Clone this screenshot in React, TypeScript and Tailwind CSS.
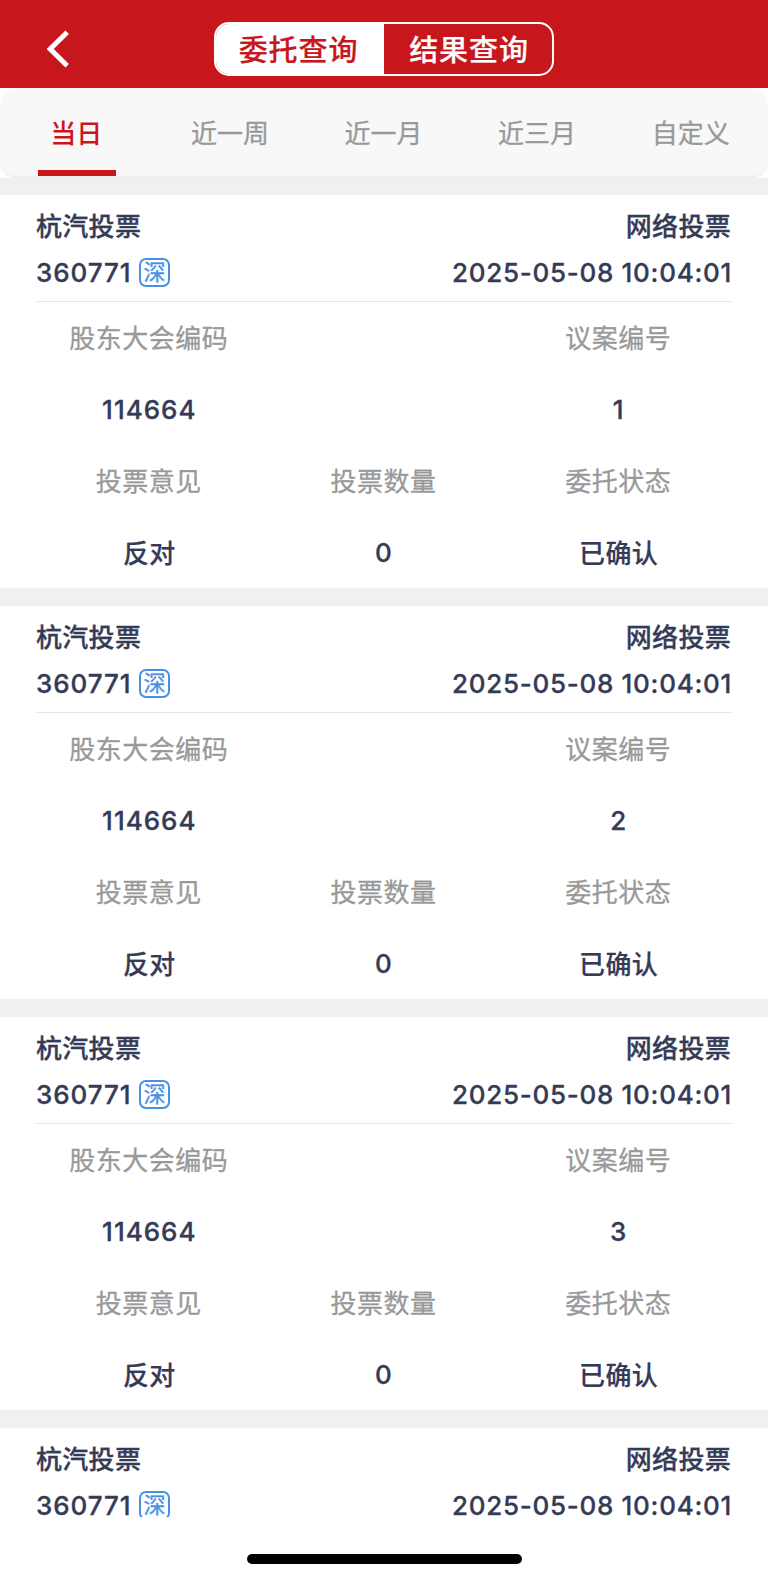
const tabs = ['当日', '近一周', '近一月', '近三月', '自定义'];

function Header() {
  return (
    <header className="flex h-[88px] shrink-0 items-start bg-[#c8161d]">
      <div className="flex w-[214px] pt-[30px] pl-[46px]">
        <svg width="24" height="38" viewBox="0 0 24 38" fill="none" stroke="#fff" strokeWidth="5">
          <path d="M21.2 2.3 4.2 19l17 16.7" />
        </svg>
      </div>
      <div className="mt-[22px] flex h-[54px] w-[340px] overflow-hidden rounded-[15px] border-2 border-white text-[29px] leading-[54px] font-medium tracking-[0.9px] [-webkit-text-stroke:0.2px]">
        <div className="w-[168px] bg-white pr-[3px] text-center text-[#c8161d]">委托查询</div>
        <div className="w-[168px] pl-[2px] text-center text-white">结果查询</div>
      </div>
    </header>
  );
}

function Tabs() {
  return (
    <nav className="flex h-[90px] shrink-0 rounded-[16px] border-b-2 border-[#eeeeee] bg-[#f8f8f8]">
      {tabs.map((tab, i) => (
        <div
          key={tab}
          className={
            i === 0
              ? 'flex flex-1 flex-col items-center text-[#c8161d] font-medium'
              : 'flex flex-1 flex-col items-center text-[#999999] [-webkit-text-stroke:0.3px]'
          }
        >
          <span className="h-[82px] pr-px text-[26px] leading-[92px]">{tab}</span>
          {i === 0 && <span className="h-[6px] w-[78px] bg-[#c8161d]" />}
        </div>
      ))}
    </nav>
  );
}

function CardHead({ clipped = false }: { clipped?: boolean }) {
  return (
    <div className="px-9 pt-[8px] font-medium text-[#353b57] [-webkit-text-stroke:0.3px]">
      <div className="flex h-[46px] items-start justify-between pt-px leading-[46px] tracking-[0.3px]">
        <span>杭汽投票</span>
        <span className="pr-px">网络投票</span>
      </div>
      <div className={clipped ? 'flex h-[35px] items-start justify-between' : 'flex h-[46px] items-start justify-between'}>
        <div className="flex items-start">
          <span className="w-[95px] leading-[47px] tracking-[0.9px]">360771</span>
          <div className={clipped ? 'mt-[9px] ml-2 h-[26px] overflow-hidden' : 'mt-[9px] ml-2 h-[29px]'}>
            <div className="flex h-[29px] w-[31px] items-center justify-center rounded-[7px] border-2 border-[#4690e8] text-[22px] leading-[25px] font-normal text-[#4690e8]">
              深
            </div>
          </div>
        </div>
        <span className="leading-[47px] tracking-[0.7px]">2025-05-08 10:04:01</span>
      </div>
    </div>
  );
}

function Label({ children }: { children: string }) {
  return (
    <div className="pt-px pr-px tracking-[0.5px] text-[#999999] [-webkit-text-stroke:0.3px]">{children}</div>
  );
}

function Value({ children }: { children: string }) {
  return (
    <div className="pt-px font-medium tracking-[0.4px] text-[#353b57] [-webkit-text-stroke:0.2px]">{children}</div>
  );
}

function NumberValue({ children }: { children: number }) {
  return (
    <div className="font-medium tracking-[1px] text-[#353b57] [-webkit-text-stroke:0.3px]">{children}</div>
  );
}

function Card({ no }: { no: number }) {
  return (
    <section className="flex h-[411px] shrink-0 flex-col border-b-[18px] border-[#f0f0f0]">
      <CardHead />
      <div className="mx-9 mt-[6px] h-px shrink-0 bg-[#e6e6e6]" />
      <div className="grid auto-rows-[71.5px] grid-cols-3 px-8 text-center leading-[71.5px]">
        <Label>股东大会编码</Label>
        <div />
        <Label>议案编号</Label>
        <NumberValue>{114664}</NumberValue>
        <div />
        <NumberValue>{no}</NumberValue>
        <Label>投票意见</Label>
        <Label>投票数量</Label>
        <Label>委托状态</Label>
        <Value>反对</Value>
        <NumberValue>{0}</NumberValue>
        <Value>已确认</Value>
      </div>
    </section>
  );
}

export default function App() {
  return (
    <div className="flex h-[1579px] w-[768px] flex-col overflow-hidden bg-white font-['Inter','Noto_Sans_CJK_SC',sans-serif] text-[26px]">
      <Header />
      <Tabs />
      <div className="h-[17px] shrink-0 bg-[#f0f0f0]" />
      {[1, 2, 3].map((no) => (
        <Card key={no} no={no} />
      ))}
      <CardHead clipped />
      <div className="mt-auto mb-[15px] flex justify-center">
        <div className="h-[10px] w-[275px] rounded-full bg-black" />
      </div>
    </div>
  );
}
